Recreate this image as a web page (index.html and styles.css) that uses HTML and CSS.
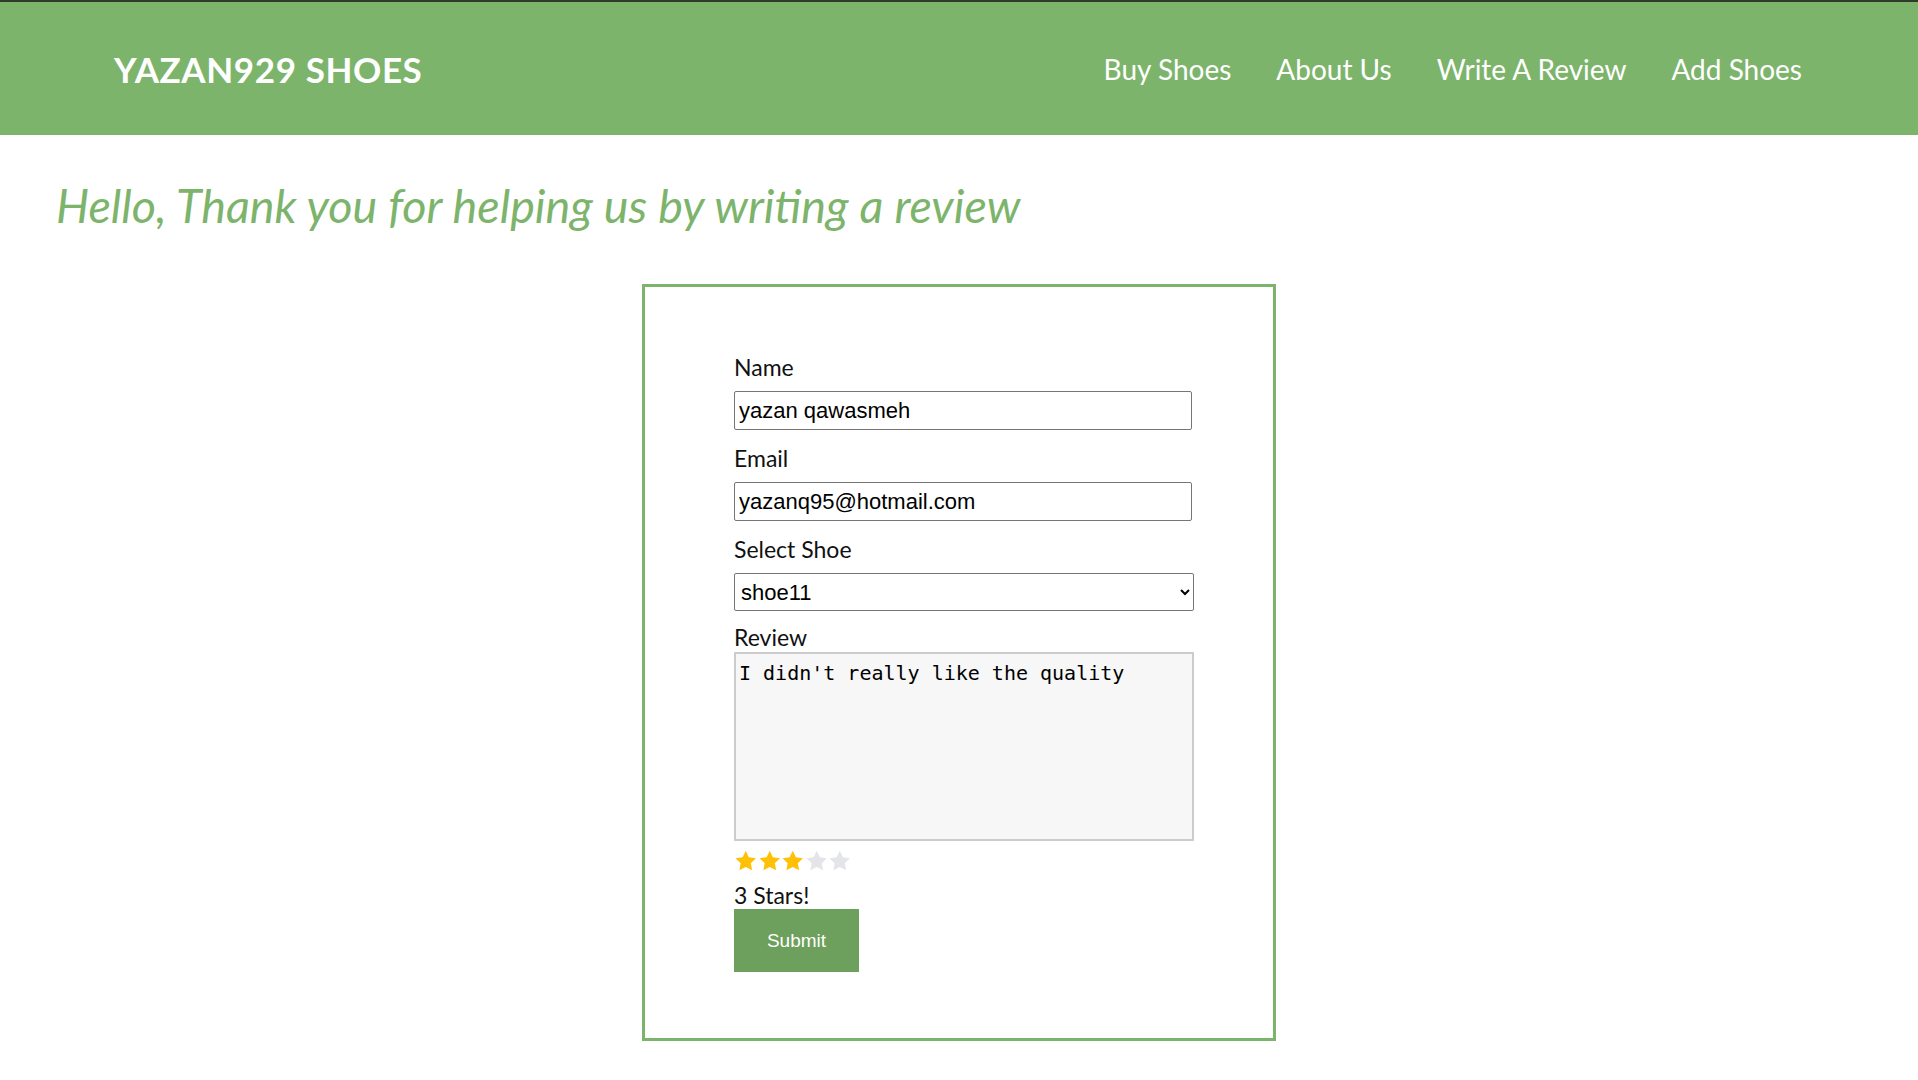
FILE: index.html
```html
<!DOCTYPE html>
<html lang="en">
<head>
<meta charset="utf-8">
<title>YAZAN929 SHOES - Write A Review</title>
<link rel="stylesheet" href="styles.css">
</head>
<body>
<header class="topbar">
  <div class="logo">YAZAN929 SHOES</div>
  <nav class="nav">
    <a href="#">Buy Shoes</a>
    <a href="#">About Us</a>
    <a href="#">Write A Review</a>
    <a href="#">Add Shoes</a>
  </nav>
</header>
<main>
  <h1 class="title">Hello, Thank you for helping us by writing a review</h1>
  <form class="form-box">
    <label class="lbl" for="name">Name</label>
    <input class="field" id="name" type="text" value="yazan qawasmeh">
    <label class="lbl gap" for="email">Email</label>
    <input class="field" id="email" type="text" value="yazanq95@hotmail.com">
    <label class="lbl gap" for="shoe">Select Shoe</label>
    <select class="field select" id="shoe">
      <option>shoe11</option>
    </select>
    <label class="lbl gap-sm" for="review">Review</label>
    <textarea class="review" id="review">I didn't really like the quality</textarea>
    <div class="stars">
      <svg class="star on" viewBox="0 0 24 24"><path d="M12 1.5l3.2 6.6 7.2 1-5.2 5.1 1.3 7.2L12 18l-6.5 3.4 1.3-7.2L1.6 9.1l7.2-1z"/></svg>
      <svg class="star on" viewBox="0 0 24 24"><path d="M12 1.5l3.2 6.6 7.2 1-5.2 5.1 1.3 7.2L12 18l-6.5 3.4 1.3-7.2L1.6 9.1l7.2-1z"/></svg>
      <svg class="star on" viewBox="0 0 24 24"><path d="M12 1.5l3.2 6.6 7.2 1-5.2 5.1 1.3 7.2L12 18l-6.5 3.4 1.3-7.2L1.6 9.1l7.2-1z"/></svg>
      <svg class="star off" viewBox="0 0 24 24"><path d="M12 1.5l3.2 6.6 7.2 1-5.2 5.1 1.3 7.2L12 18l-6.5 3.4 1.3-7.2L1.6 9.1l7.2-1z"/></svg>
      <svg class="star off" viewBox="0 0 24 24"><path d="M12 1.5l3.2 6.6 7.2 1-5.2 5.1 1.3 7.2L12 18l-6.5 3.4 1.3-7.2L1.6 9.1l7.2-1z"/></svg>
    </div>
    <div class="rating-text">3 Stars!</div>
    <button class="submit" type="button">Submit</button>
  </form>
</main>
</body>
</html>
```
FILE: styles.css
```css
html, body {
  margin: 0;
  padding: 0;
  background: #ffffff;
}

body {
  font-family: Lato, "Open Sans", sans-serif;
  color: #111;
}

.topbar {
  box-sizing: border-box;
  height: 135px;
  border-top: 2px solid #2f3a2b;
  background: #7db46c;
  display: flex;
  align-items: center;
  justify-content: space-between;
  padding: 0 116px 0 114px;
}

.logo {
  color: #ffffff;
  font-family: Lato, sans-serif;
  font-weight: 700;
  font-size: 35px;
  letter-spacing: 0.6px;
  line-height: 40px;
}

.nav {
  display: flex;
  gap: 45px;
}

.nav a {
  color: #ffffff;
  text-decoration: none;
  font-family: Lato, sans-serif;
  font-size: 28px;
}

main {
  padding: 0;
}

.title {
  margin: 44px 0 53px 56px;
  font-family: Lato, sans-serif;
  font-style: italic;
  font-weight: 400;
  font-size: 46.7px;
  line-height: 52px;
  color: #7db46c;
}

.form-box {
  box-sizing: border-box;
  width: 634px;
  margin: 0 auto;
  border: 3px solid #7db46c;
  padding: 66px 81px 66px 89px;
  display: flex;
  flex-direction: column;
  align-items: flex-start;
}

.lbl {
  display: block;
  font-family: Lato, sans-serif;
  font-size: 23px;
  line-height: 28px;
  height: 28px;
  color: #111;
}

.lbl.gap {
  margin-top: 14px;
}

.lbl.gap-sm {
  margin-top: 12px;
}

.field {
  box-sizing: border-box;
  width: 458px;
  height: 39px;
  margin-top: 10px;
  border: 1px solid #767676;
  border-radius: 2px;
  padding: 0 4px;
  font-family: "Liberation Sans", Arial, sans-serif;
  font-size: 22px;
  color: #000;
  background: #fff;
}

.select {
  width: 460px;
  height: 38px;
  padding: 0 2px;
}

.review {
  box-sizing: border-box;
  width: 460px;
  height: 189px;
  margin-top: 1px;
  border: 2px solid #cccccc;
  background: #f7f7f7;
  padding: 6px 3px;
  font-family: "DejaVu Sans Mono", monospace;
  font-size: 20px;
  line-height: 26px;
  color: #000;
  resize: none;
}

.stars {
  display: flex;
  margin-top: 8px;
  height: 24px;
}

.star {
  width: 23.5px;
  height: 24px;
}

.star.on {
  fill: #ffc107;
}

.star.off {
  fill: #e4e5e9;
}

.rating-text {
  margin-top: 8px;
  font-family: Lato, sans-serif;
  font-size: 23px;
  line-height: 28px;
  color: #111;
}

.submit {
  width: 125px;
  height: 63px;
  border: none;
  background: #6ca05c;
  color: #ffffff;
  font-family: "Liberation Sans", Arial, sans-serif;
  font-size: 19px;
  cursor: pointer;
}
```
